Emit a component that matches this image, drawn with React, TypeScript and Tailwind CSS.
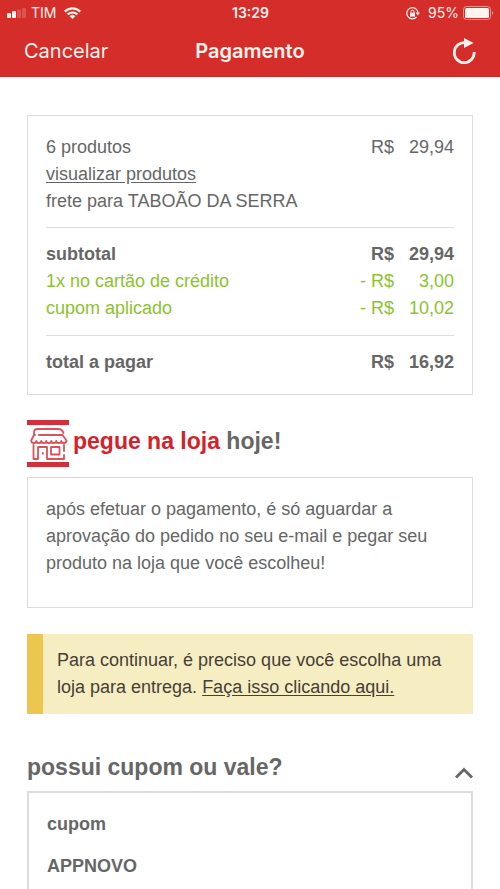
import React from 'react';

interface PriceRowProps {
    label: string;
    currency: string;
    value: string;
    className?: string;
}

const DISCOUNTS = [
    { label: '1x no cartão de crédito', value: '3,00' },
    { label: 'cupom aplicado', value: '10,02' },
];

const SignalIcon = () => (
    <svg width="20" height="10" viewBox="0 0 20 10" fill="currentColor" aria-hidden="true">
        <rect x="0" y="5" width="4" height="5" rx="1" />
        <rect x="5" y="3" width="4" height="7" rx="1" />
        <rect x="10" y="1.5" width="4" height="8.5" rx="1" opacity="0.2" />
        <rect x="15" y="0" width="4" height="10" rx="1" opacity="0.2" />
    </svg>
);

const WifiIcon = () => (
    <svg width="17" height="12" viewBox="0 0 17 12" fill="none" stroke="currentColor" strokeWidth="2.2" aria-hidden="true">
        <path d="M.8 4.6a10.9 10.9 0 0 1 15.4 0" />
        <path d="M3.6 7.5a7 7 0 0 1 9.8 0" />
        <path d="M8.5 12 5.7 9.2a4 4 0 0 1 5.6 0z" fill="currentColor" stroke="none" />
    </svg>
);

const RotationLockIcon = () => (
    <svg width="14" height="13" viewBox="0 0 14 13" fill="none" stroke="currentColor" aria-hidden="true">
        <path d="M10.6 10A5.6 5.6 0 1 1 12 5.6" strokeWidth="1.2" />
        <path d="M9.6 5.6H14l-2.2 2.9z" fill="currentColor" stroke="none" />
        <rect x="4" y="5.8" width="5" height="3.8" fill="currentColor" stroke="none" />
        <path d="M5 6V4.7a1.5 1.5 0 0 1 3 0V6" strokeWidth="1" />
    </svg>
);

const BatteryIcon = () => (
    <svg width="31" height="14" viewBox="0 0 31 14" fill="none" aria-hidden="true">
        <rect x=".5" y=".5" width="27" height="13" rx="3" stroke="currentColor" opacity="0.5" />
        <rect x="2" y="2" width="24" height="10" rx="1.5" fill="currentColor" />
        <path d="M29 5c1.6.5 1.6 3.5 0 4z" fill="currentColor" opacity="0.5" />
    </svg>
);

const ReloadIcon = () => (
    <svg width="23" height="27" viewBox="0 0 23 27" fill="none" aria-hidden="true">
        <path d="M12.5 4.7A10 10 0 1 0 21.2 14" stroke="currentColor" strokeWidth="2.8" />
        <path d="M11 0v10L20.5 5z" fill="currentColor" />
    </svg>
);

const StoreIcon = () => (
    <svg width="42" height="47" viewBox="0 0 42 47" fill="none" stroke="#d9535a" strokeWidth="1.8" strokeLinejoin="round" strokeLinecap="round" aria-hidden="true">
        <path d="M0 0h42v5H0zM0 42h42v5H0z" fill="#d2303a" stroke="none" />
        <path d="M7 14v-1.5Q7 9 10.5 9h21q3.5 0 5 4" />
        <path d="M12 15h23.5l4 5.5q0 2.5-2.6 2.5t-2.6-2q0 2-2.5 2t-2.5-2q0 2-2.5 2t-2.5-2q0 2-2.5 2t-2.5-2q0 2-2.5 2t-2.5-2q0 2-2.5 2t-2.5-2q0 2-2.5 2t-2.6-2.5L7 15h1" />
        <path d="M6.5 25v14H11V27h9v12h17v-4M37 31v-6" />
        <rect x="24" y="27" width="8.5" height="7.5" />
        <path d="M15.8 33v.8" />
    </svg>
);

const ChevronUpIcon = () => (
    <svg width="18" height="14" viewBox="0 0 18 14" fill="none" stroke="currentColor" strokeWidth="3" aria-hidden="true">
        <path d="M1 10.5 9 2.5l8 8" />
    </svg>
);

const PriceRow: React.FC<PriceRowProps> = ({ label, currency, value, className = '' }) => (
    <div className={`flex ${className}`}>
        <dt className="flex-1">{label}</dt>
        <dd>{currency}</dd>
        <dd className="w-15 text-right">{value}</dd>
    </div>
);

const App: React.FC = () => {
    return (
        <div className="flex min-h-screen flex-col bg-white font-['Liberation_Sans',Arial,sans-serif] text-lg leading-[27px] text-[#666]">
            <header className="border-b border-[#c52b28] bg-[#d52d29] font-[Inter,sans-serif] text-[#fff3ee]">
                {/* Status bar */}
                <div className="grid h-[26px] grid-cols-3 items-center pr-1.5 pl-[7px] text-sm">
                    <div className="flex items-center gap-1">
                        <SignalIcon />
                        <span>TIM</span>
                        <span className="ml-1"><WifiIcon /></span>
                    </div>
                    <span className="text-center font-semibold">13:29</span>
                    <div className="flex items-center justify-end gap-1">
                        <RotationLockIcon />
                        <span className="ml-1">95%</span>
                        <BatteryIcon />
                    </div>
                </div>

                <nav className="grid h-[50px] grid-cols-3 items-center px-6 text-xl">
                    <button type="button" className="justify-self-start">Cancelar</button>
                    <h1 className="text-center font-semibold">Pagamento</h1>
                    <button type="button" aria-label="Recarregar" className="justify-self-end">
                        <ReloadIcon />
                    </button>
                </nav>
            </header>

            <main className="flex flex-1 flex-col px-[27px] pt-[38px]">
                {/* Order summary */}
                <section className="border border-[#dcdcdc] p-[18px]">
                    <dl>
                        <PriceRow label="6 produtos" currency="R$" value="29,94" />
                    </dl>
                    <a href="#produtos" className="block underline underline-offset-2">visualizar produtos</a>
                    <p>frete para TABOÃO DA SERRA</p>

                    <dl className="mt-3 mb-[13px] border-y border-[#dcdcdc] py-[13px]">
                        <PriceRow label="subtotal" currency="R$" value="29,94" className="font-bold" />
                        {DISCOUNTS.map((discount) => (
                            <PriceRow
                                key={discount.label}
                                label={discount.label}
                                currency="- R$"
                                value={discount.value}
                                className="text-[#8dc230]"
                            />
                        ))}
                    </dl>

                    <dl>
                        <PriceRow label="total a pagar" currency="R$" value="16,92" className="font-bold" />
                    </dl>
                </section>

                {/* Store pickup */}
                <h2 className="mt-[25px] flex items-center gap-1 text-[23px] font-bold">
                    <StoreIcon />
                    <span className="pb-1"><span className="text-[#d2232a]">pegue na loja</span> hoje!</span>
                </h2>
                <section className="mt-[10px] border border-[#dcdcdc] px-[18px] pt-[18px] pb-[30px]">
                    <p>
                        após efetuar o pagamento, é só aguardar a aprovação do pedido no seu e-mail e pegar seu produto na loja que você escolheu!
                    </p>
                </section>

                <div role="alert" className="mt-[26px] border-l-16 border-[#ebc750] bg-[#f7edc3] py-[13px] pr-4 pl-[14px] text-[#444036]">
                    Para continuar, é preciso que você escolha uma loja para entrega.{' '}
                    <a href="#lojas" className="underline underline-offset-2">Faça isso clicando aqui.</a>
                </div>

                {/* Coupon */}
                <button type="button" aria-expanded="true" className="mt-10 flex items-end justify-between text-left text-[23px] font-bold">
                    possui cupom ou vale?
                    <ChevronUpIcon />
                </button>
                <section className="mt-[10px] flex-1 border-2 border-b-0 border-[#dcdcdc] px-[18px] pt-[18px] font-bold">
                    <h3>cupom</h3>
                    <p className="mt-[15px]">APPNOVO</p>
                </section>
            </main>
        </div>
    );
};

export default App;
